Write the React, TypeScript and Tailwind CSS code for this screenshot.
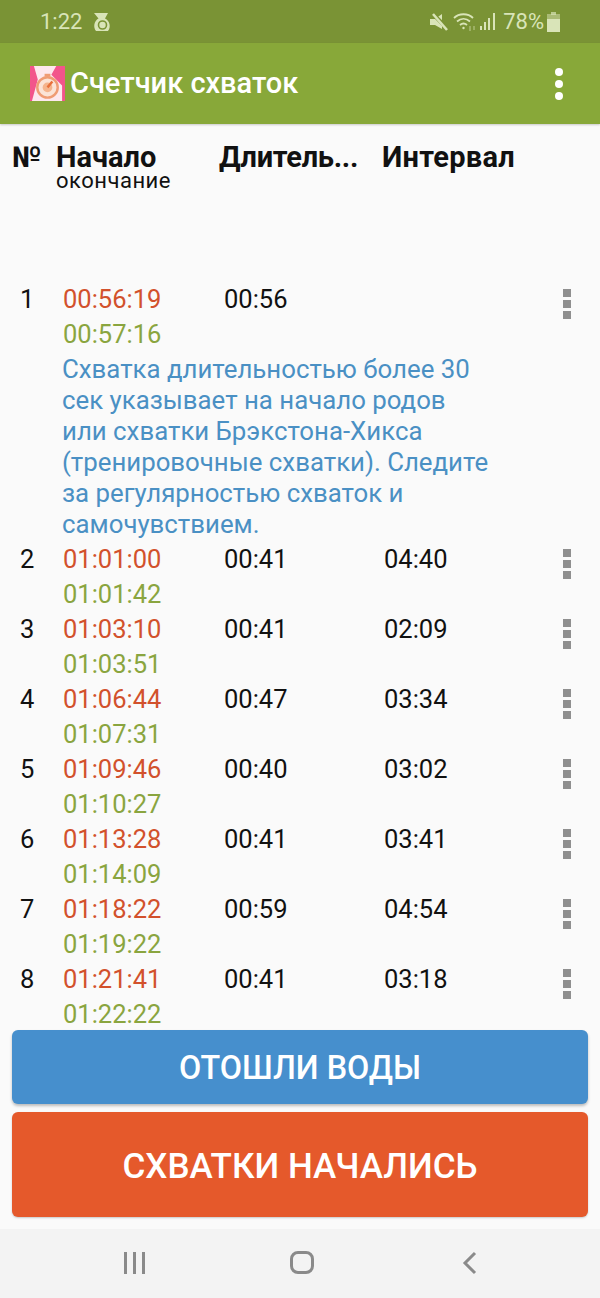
interface Row {
  n: number;
  start: string;
  end: string;
  duration: string;
  interval: string;
}

const ROWS: Row[] = [
  { n: 2, start: "01:01:00", end: "01:01:42", duration: "00:41", interval: "04:40" },
  { n: 3, start: "01:03:10", end: "01:03:51", duration: "00:41", interval: "02:09" },
  { n: 4, start: "01:06:44", end: "01:07:31", duration: "00:47", interval: "03:34" },
  { n: 5, start: "01:09:46", end: "01:10:27", duration: "00:40", interval: "03:02" },
  { n: 6, start: "01:13:28", end: "01:14:09", duration: "00:41", interval: "03:41" },
  { n: 7, start: "01:18:22", end: "01:19:22", duration: "00:59", interval: "04:54" },
  { n: 8, start: "01:21:41", end: "01:22:22", duration: "00:41", interval: "03:18" },
];

const NOTE_LINES = [
  "Схватка длительностью более 30",
  "сек указывает на начало родов",
  "или схватки Брэкстона-Хикса",
  "(тренировочные схватки). Следите",
  "за регулярностью схваток и",
  "самочувствием.",
];

function RowMenu() {
  return (
    <div className="flex flex-col items-center gap-[3px] pt-[7px]">
      <span className="h-[8px] w-[8px] bg-[#8f8f8f]" />
      <span className="h-[8px] w-[8px] bg-[#8f8f8f]" />
      <span className="h-[8px] w-[8px] bg-[#8f8f8f]" />
    </div>
  );
}

function ContractionRow({ row }: { row: Row }) {
  return (
    <div className="flex pl-[20px] text-[25.500px] leading-[35px] text-[#111]">
      <div className="w-[43px]">{row.n}</div>
      <div className="w-[161px]">
        <div className="text-[#d2512c]">{row.start}</div>
        <div className="text-[#8aa53f]">{row.end}</div>
      </div>
      <div className="w-[160px]">{row.duration}</div>
      <div className="w-[159px]">{row.interval}</div>
      <div className="w-[48px]">
        <RowMenu />
      </div>
    </div>
  );
}

function AppLogo() {
  return (
    <svg width="35" height="35" viewBox="0 0 36 36">
      <rect width="36" height="36" fill="#f2558b" />
      <path d="M4 0H27L22 9L33 20V36H2L8 14Z" fill="#fde8ee" />
      <circle cx="18" cy="22" r="10.500" fill="#fbe3d6" stroke="#ef9c74" strokeWidth="2.500" />
      <circle cx="18" cy="22" r="5" fill="#f5b48c" />
      <path d="M18 22L23 16" stroke="#e8703a" strokeWidth="2.500" />
      <rect x="15" y="8" width="6" height="3" fill="#ef9c74" />
    </svg>
  );
}

function StatusIcons() {
  return (
    <div className="flex items-center text-[#d9e4b8]">
      <svg width="20" height="20" viewBox="0 0 20 20" className="mr-[4px]" fill="currentColor">
        <path d="M1 7H6L13 2V17L6 13H1Z" />
        <path d="M3 1L19 17" stroke="#7a9335" strokeWidth="4" />
        <path d="M4 2L18 18" stroke="currentColor" strokeWidth="2.500" />
      </svg>
      <svg width="24" height="22" viewBox="0 0 24 22" className="mr-[3px]" fill="none" stroke="currentColor" strokeWidth="1.800">
        <path d="M1 7C6 2 15 2 20 7" />
        <path d="M4 10.500C8 7 13 7 17 10.500" />
        <path d="M7 14C9 12.300 12 12.300 14 14" />
        <circle cx="10.500" cy="17" r="1.200" fill="currentColor" stroke="none" />
        <path d="M17 15V20M21 15V19" strokeWidth="1.200" opacity="0.6" />
      </svg>
      <svg width="16" height="19" viewBox="0 0 16 19" className="mr-[7px]" fill="currentColor">
        <rect x="0" y="14" width="2" height="4" />
        <rect x="4" y="10" width="2" height="8" />
        <rect x="8" y="6" width="2" height="12" />
        <rect x="13" y="1" width="2" height="17" />
      </svg>
      <span className="text-[22px] leading-none">78%</span>
      <svg width="13" height="20" viewBox="0 0 13 20" className="ml-[3px]" fill="currentColor">
        <rect x="4" y="0" width="5" height="3" opacity="0.7" />
        <rect x="0" y="2" width="13" height="5" opacity="0.5" />
        <rect x="0" y="7" width="13" height="13" />
      </svg>
    </div>
  );
}

export default function App() {
  return (
    <div className="flex h-[1298px] w-[600px] flex-col overflow-hidden bg-[#fafafa] font-['Roboto',sans-serif]">
      {/* Status bar */}
      <div className="flex h-[43px] shrink-0 items-center justify-between bg-[#7a9335] pl-[40px] pr-[40px]">
        <div className="flex items-center gap-[11px] text-[#d9e4b8]">
          <span className="text-[22px] leading-none">1:22</span>
          <svg width="18" height="20" viewBox="0 0 18 20" fill="currentColor">
            <path d="M1 1H15L12 6.500C17 9 18 15 15 19H3C0 15 1 9 5.500 6.500Z" />
            <circle cx="9.500" cy="13" r="4" fill="none" stroke="#7a9335" strokeWidth="1.600" />
          </svg>
        </div>
        <StatusIcons />
      </div>

      {/* Toolbar */}
      <div className="flex h-[81px] shrink-0 items-center justify-between bg-[#88a839] pl-[30px] pr-[37px] shadow-[0_1px_2px_rgba(0,0,0,0.2)]">
        <div className="flex items-center gap-[5px]">
          <AppLogo />
          <span className="text-[29px] font-medium leading-none text-white">Счетчик схваток</span>
        </div>
        <div className="flex flex-col gap-[4px]">
          <span className="h-[8px] w-[8px] rounded-full bg-white" />
          <span className="h-[8px] w-[8px] rounded-full bg-white" />
          <span className="h-[8px] w-[8px] rounded-full bg-white" />
        </div>
      </div>

      {/* Table header */}
      <div className="flex h-[158px] shrink-0 pl-[12px] pt-[19px] text-[29px] font-bold leading-[28px] text-[#111]">
        <div className="w-[44px] tracking-[-1px]">№</div>
        <div className="w-[163px]">
          <div>Начало</div>
          <div className="text-[22px] font-normal leading-[20px] tracking-[0.5px]">окончание</div>
        </div>
        <div className="w-[163px] tracking-[-0.3px]">Длитель...</div>
        <div className="tracking-[0.25px]">Интервал</div>
      </div>

      {/* Rows */}
      <div className="min-h-0 flex-1 overflow-hidden">
        <ContractionRow row={{ n: 1, start: "00:56:19", end: "00:57:16", duration: "00:56", interval: "" }} />
        <div className="mb-[1px] pl-[62px] pt-[2px] text-[25.800px] leading-[31px] text-[#4a90c4]">
          {NOTE_LINES.map((line) => (
            <div key={line}>{line}</div>
          ))}
        </div>
        <div className="pt-[1px]" />
        {ROWS.map((row) => (
          <ContractionRow key={row.n} row={row} />
        ))}
      </div>

      {/* Buttons */}
      <div className="flex shrink-0 flex-col gap-[8px] px-[12px] pb-[12px]">
        <button className="h-[74px] rounded-[6px] bg-[#468fcd] pt-[2px] text-[32.300px] font-medium text-white shadow-[0_2px_3px_rgba(0,0,0,0.25)]">
          ОТОШЛИ ВОДЫ
        </button>
        <button className="h-[105px] rounded-[6px] bg-[#e5592b] pt-[5px] text-[35px] font-medium text-white shadow-[0_1px_2px_rgba(0,0,0,0.2)]">
          СХВАТКИ НАЧАЛИСЬ
        </button>
      </div>

      {/* Navigation bar */}
      <div className="flex h-[69px] shrink-0 items-center justify-center bg-[#f3f3f3] pb-[2px]">
        <div className="flex w-[170px] items-center pl-[4px]">
          <div className="flex gap-[6px]">
            <span className="h-[22px] w-[3px] bg-[#8a8a8a]" />
            <span className="h-[22px] w-[3px] bg-[#8a8a8a]" />
            <span className="h-[22px] w-[3px] bg-[#8a8a8a]" />
          </div>
        </div>
        <span className="h-[23px] w-[24px] rounded-[8px] border-[3px] border-[#8a8a8a]" />
        <div className="flex w-[166px] justify-end pr-[2px]">
          <svg width="16" height="24" viewBox="0 0 16 24" fill="none" stroke="#8a8a8a" strokeWidth="3">
            <path d="M13 2L3 12L13 22" />
          </svg>
        </div>
      </div>
    </div>
  );
}
